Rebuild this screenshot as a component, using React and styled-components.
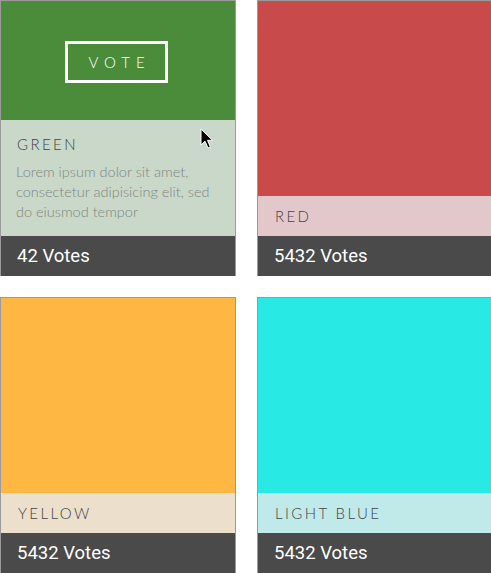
import React from "react";
import styled, { createGlobalStyle } from "styled-components";

const GlobalStyle = createGlobalStyle`
  html, body {
    margin: 0;
    padding: 0;
    background: #fff;
    overflow: hidden;
  }
  body {
    font-family: "Lato", "Open Sans", sans-serif;
  }
`;

const Grid = styled.div`
  display: grid;
  grid-template-columns: 236px 236px;
  column-gap: 21px;
  row-gap: 21px;
  width: 493px;
`;

const Card = styled.div`
  position: relative;
  display: flex;
  flex-direction: column;
  height: 276px;
  box-sizing: border-box;
  border: 1px solid #9a9a9a;
  border-bottom: none;
`;

const Swatch = styled.div`
  flex: 1;
  background: ${(p) => p.color};
  display: flex;
  align-items: center;
  justify-content: center;
`;

const VoteButton = styled.button`
  width: 103px;
  height: 42px;
  margin-left: -3px;
  margin-top: 3px;
  box-sizing: border-box;
  background: transparent;
  border: 3px solid #fff;
  color: #fff;
  font-family: "Lato", sans-serif;
  font-size: 15px;
  font-weight: 300;
  letter-spacing: 6px;
  padding: 0 0 0 6px;
  cursor: pointer;
`;

const Info = styled.div`
  background: ${(p) => p.tint};
  padding: ${(p) => (p.open ? "14px 16px 14px 16px" : "10px 17px")};
`;

const Label = styled.div`
  font-family: "Lato", sans-serif;
  font-size: 15px;
  font-weight: 300;
  line-height: 20px;
  letter-spacing: 2.4px;
  color: #444;
  text-transform: uppercase;
`;

const Description = styled.p`
  margin: 8px 0 0 -1px;
  font-family: "Lato", sans-serif;
  font-size: 14.5px;
  font-weight: 300;
  line-height: 20px;
  color: #7f867f;
  padding-right: 2px;
`;

const Votes = styled.div`
  height: 40px;
  background: #4a4a4a;
  color: #fff;
  font-family: "Roboto", sans-serif;
  font-size: 18.5px;
  line-height: 40px;
  padding-left: 16px;
`;

const Pointer = styled.svg`
  position: absolute;
  left: 199px;
  top: 127px;
  width: 14px;
  height: 22px;
  pointer-events: none;
`;

const colors = [
  {
    name: "Green",
    color: "#4b8c3a",
    tint: "#c9d8c9",
    votes: 42,
    open: true,
  },
  { name: "Red", color: "#c94a4a", tint: "#e3c8cb", votes: 5432 },
  { name: "Yellow", color: "#feb742", tint: "#ecdfcc", votes: 5432 },
  { name: "Light Blue", color: "#28e9e3", tint: "#c0e9ea", votes: 5432 },
];

const ColorCard = ({ item }) => (
  <Card>
    <Swatch color={item.color}>
      {item.open && <VoteButton>VOTE</VoteButton>}
    </Swatch>
    <Info tint={item.tint} open={item.open}>
      <Label>{item.name}</Label>
      {item.open && (
        <Description>
          Lorem ipsum dolor sit amet, consectetur adipisicing elit, sed do
          eiusmod tempor
        </Description>
      )}
    </Info>
    <Votes>{item.votes} Votes</Votes>
    {item.open && (
      <Pointer viewBox="0 0 14 22">
        <path
          d="M1 1 L1 17 L5 13.2 L8 20 L10.4 19 L7.5 12.3 L12.5 12.3 Z"
          fill="#000"
          stroke="#fff"
          strokeWidth="1"
          strokeLinejoin="round"
        />
      </Pointer>
    )}
  </Card>
);

export default function App() {
  return (
    <>
      <GlobalStyle />
      <Grid>
        {colors.map((item) => (
          <ColorCard key={item.name} item={item} />
        ))}
      </Grid>
    </>
  );
}
